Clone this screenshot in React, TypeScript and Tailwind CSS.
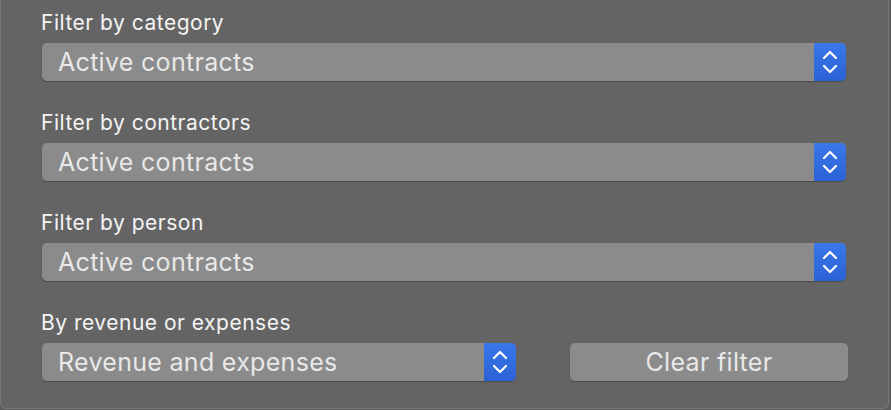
import React from "react";

function Stepper() {
  return (
    <div className="flex h-full w-[32px] items-center justify-center rounded-r-[5px] bg-gradient-to-b from-[#3a77ea] to-[#2b62d6]">
      <svg width="16" height="26" viewBox="0 0 16 26" fill="none" stroke="white" strokeWidth="2.2" strokeLinecap="round" strokeLinejoin="round">
        <path d="M2 9 L8 3 L14 9" />
        <path d="M2 17 L8 23 L14 17" />
      </svg>
    </div>
  );
}

function Select({ value, className }: { value: string; className?: string }) {
  return (
    <div className={"flex h-[38px] items-stretch rounded-[5px] bg-[#8b8b8b] shadow-[0_1px_1px_rgba(0,0,0,0.25)] " + (className ?? "")}>
      <div className="flex flex-1 items-center pl-[16px] pt-[1px] text-[25px] tracking-[0.3px] text-[#e8e8e8]">{value}</div>
      <Stepper />
    </div>
  );
}

function Label({ children }: { children: React.ReactNode }) {
  return <div className="h-[30px] pl-[40px] text-[21px] leading-[30px] tracking-[0.5px] text-[#f4f4f4]">{children}</div>;
}

function Group({ label, children }: { label: string; children: React.ReactNode }) {
  return (
    <div className="flex flex-col">
      <Label>{label}</Label>
      <div className="mt-[5px] pl-[41px] pr-[42px]">{children}</div>
    </div>
  );
}

export default function App() {
  return (
    <div className="h-[410px] w-[891px] bg-[#5c5c5c]" style={{ fontFamily: "Inter, 'Noto Sans', sans-serif" }}>
      <div className="h-[409px] w-[889px] rounded-b-[6px] border-x border-b border-[#777777] bg-[#646464]">
        <div className="flex flex-col gap-[27px] pt-[8px]">
          <Group label="Filter by category">
            <Select value="Active contracts" />
          </Group>
          <Group label="Filter by contractors">
            <Select value="Active contracts" />
          </Group>
          <Group label="Filter by person">
            <Select value="Active contracts" />
          </Group>
          <div className="flex flex-col">
            <Label>By revenue or expenses</Label>
            <div className="mt-[5px] flex items-center pl-[41px]">
              <Select value="Revenue and expenses" className="w-[474px]" />
              <div className="ml-[54px] flex h-[38px] w-[278px] items-center justify-center rounded-[5px] bg-[#8b8b8b] pt-[1px] text-[25px] tracking-[0.3px] text-[#e8e8e8] shadow-[0_1px_1px_rgba(0,0,0,0.25)]">
                Clear filter
              </div>
            </div>
          </div>
        </div>
      </div>
    </div>
  );
}
